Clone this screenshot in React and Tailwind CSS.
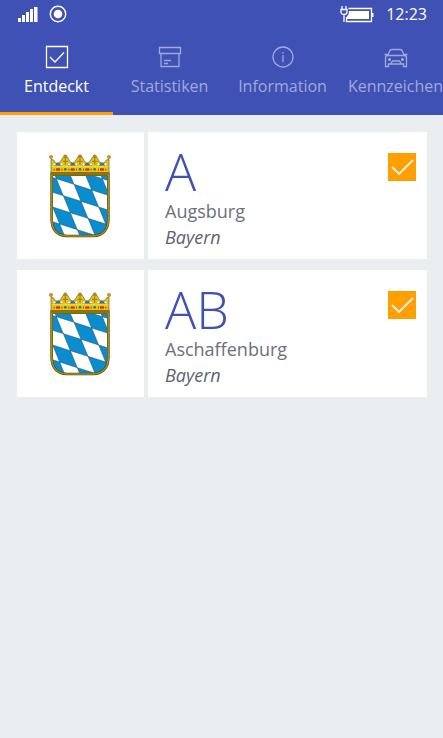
import { useState } from "react";

const GRID = [-4, -3, -2, -1, 0, 1, 2, 3];

// Lozenge field: sheared lattice, alternate cells blue.
const LOZENGES = GRID.flatMap((i) =>
  GRID.filter((j) => (i + j) % 2 !== 0).map((j) => {
    const x = 96 + 53 * i + 21 * j;
    const y = 142 + 17 * i + 51 * j;
    return `M${x} ${y}l53 17l21 51l-53 -17z`;
  })
).join("");

const SHIELD = "M8 62H178V196C178 226 162 245 132 246H54C24 245 8 226 8 196Z";

function CoatOfArms({ id }) {
  return (
    <svg className="h-[84px] w-[62px]" viewBox="0 0 186 252" role="img" aria-label="Wappen Bayern">
      <clipPath id={id}>
        <path d={SHIELD} />
      </clipPath>
      <path d={SHIELD} fill="#fff" />
      <path d={LOZENGES} fill="#0a8dcf" stroke="#24485c" strokeWidth="1.5" clipPath={`url(#${id})`} />
      <path d={SHIELD} fill="none" stroke="#4b400c" strokeWidth="8" />
      <path d={SHIELD} fill="none" stroke="#a98e14" strokeWidth="5" />
      <path
        d="M6 60L6 16L14 18Q18 30 27 28Q36 24 42 10L49 5L56 10Q62 26 71 28Q80 24 86 10L93 5L100 10Q106 26 115 28Q124 24 130 10L137 5L144 10Q150 26 159 28Q168 28 172 18L180 16L180 60Z"
        fill="#e6c41c"
        stroke="#6b5810"
        strokeWidth="2"
      />
      {[27, 71, 115, 159].map((x) => (
        <g key={x}>
          <path d={`M${x - 9} 34Q${x} 18 ${x + 9} 34Z`} fill="#1583bd" stroke="#55501a" />
          <circle cx={x - 11} cy="31" r="4" fill="#fff" stroke="#716425" />
          <circle cx={x + 11} cy="31" r="4" fill="#fff" stroke="#716425" />
          <rect x={x - 6} y="43" width="12" height="7" fill="#d82b20" />
        </g>
      ))}
      {[49, 93, 137].map((x) => (
        <g key={x}>
          <circle cx={x} cy="7" r="5" fill="#bd8b1b" stroke="#6b5810" />
          <path d={`M${x} 13V32M${x - 8} 22H${x + 8}`} stroke="#a38a17" strokeWidth="4" />
          <circle cx={x} cy="46" r="4" fill="#20817f" />
        </g>
      ))}
      <circle cx="6" cy="9" r="5" fill="#df901b" stroke="#6b5810" />
      <circle cx="180" cy="9" r="5" fill="#df901b" stroke="#6b5810" />
      <path d="M8 38H178" stroke="#f7d91d" strokeWidth="4" />
      <path d="M14 47H17M37 47H40M58 47H61M81 47H84M102 47H105M125 47H128M147 47H150M169 47H172" stroke="#6d5d13" strokeWidth="5" />
      <path d="M5 58H181" stroke="#8b730d" strokeWidth="8" />
    </svg>
  );
}

function TabIcon({ name }) {
  return (
    <svg className="size-6" viewBox="0 0 24 24" fill="none" stroke="currentColor" strokeWidth="1.3" aria-hidden="true">
      {name === "check" && <path d="M1.5 1.5H22.5V22.5H1.5ZM5 12L10 17L19 7.500" />}
      {name === "archive" && <path d="M1.500 2.500H22.500V8.500H1.500ZM3 8.500V21.500H21V8.500M6 15.500H13M6 18.500H10" />}
      {name === "info" && (
        <>
          <circle cx="12" cy="12" r="10" />
          <path d="M12 10V17M12 7V8.500" />
        </>
      )}
      {name === "car" && (
        <>
          <path d="M3.500 11L5.500 6.500Q6 4.500 8 4.500H16Q18 4.500 18.500 6.500L20.500 11M.5 9.500H4M20 9.500H23.500M4 10.500H20Q22.500 10.500 22.500 13V21.500H19.500V19H4.500V21.500H1.500V13Q1.500 10.500 4 10.500ZM6.500 19L8.500 16H15.500L17.500 19" />
          <circle cx="5.500" cy="14.500" r=".9" fill="currentColor" />
          <circle cx="18.500" cy="14.500" r=".9" fill="currentColor" />
        </>
      )}
    </svg>
  );
}

const TABS = [
  { label: "Entdeckt", icon: "check" },
  { label: "Statistiken", icon: "archive" },
  { label: "Information", icon: "info" },
  { label: "Kennzeichen", icon: "car" },
];

function StatusBar() {
  return (
    <div className="flex h-7 items-center justify-between pr-4 pl-4 text-white">
      <div className="flex items-center gap-[11px]">
        <svg className="h-4 w-[22px]" viewBox="0 0 22 16" fill="currentColor" aria-label="Signal">
          <path d="M2 12H5V16H2ZM6 9H9V16H6ZM10 6H13V16H10ZM14 3H17V16H14ZM18 1H21.500V16H18Z" />
        </svg>
        <svg className="size-[18px]" viewBox="0 0 18 18" aria-hidden="true">
          <circle cx="9" cy="9" r="7.700" fill="none" stroke="currentColor" strokeWidth="1.400" />
          <circle cx="9" cy="9" r="4.300" fill="currentColor" />
        </svg>
      </div>
      <div className="flex items-center gap-3">
        <svg className="h-[18px] w-[34px]" viewBox="0 0 34 18" fill="none" stroke="currentColor" strokeWidth="1.300" aria-label="Akku">
          <path d="M2 1V4M6 1V4M1 4.500H7V7Q7 9.500 4 9.500Q1 9.500 1 7ZM4 9.500V17M8.500 3.500H31.500V16.500H6.500V12" />
          <path d="M9 6H29V14H7V11Q9 10 9 6Z" fill="currentColor" stroke="none" />
          <path d="M32.500 8V12" strokeWidth="2" />
        </svg>
        <time className="text-base leading-6">12:23</time>
      </div>
    </div>
  );
}

function PlateCard({ code, city, state }) {
  const [found, setFound] = useState(true);
  return (
    <li className="flex gap-1">
      <div className="flex w-[127px] shrink-0 items-center justify-center bg-white pr-px">
        <CoatOfArms id={`shield-${code}`} />
      </div>
      <div className="flex min-w-0 flex-1 items-start justify-between bg-white pt-3 pr-[11px] pb-[9px] pl-[17px]">
        <div className="text-[18px] leading-[26px] text-[#6b707d]">
          <h2 className="text-[52px] leading-[54px] font-light text-[#3f51b5]">{code}</h2>
          <p>{city}</p>
          <p className="text-[#5d6270] italic">{state}</p>
        </div>
        <label className="mt-[9px] grid size-7 shrink-0 cursor-pointer bg-[#ffa000]">
          <input
            type="checkbox"
            checked={found}
            onChange={(e) => setFound(e.target.checked)}
            aria-label={`${city} entdeckt`}
            className="peer col-start-1 row-start-1 size-7 appearance-none"
          />
          <svg
            className="pointer-events-none invisible col-start-1 row-start-1 size-7 peer-checked:visible"
            viewBox="0 0 28 28"
            fill="none"
            stroke="#f5f3ee"
            strokeWidth="1.800"
            aria-hidden="true"
          >
            <path d="M4 14L11 21L25 7" />
          </svg>
        </label>
      </div>
    </li>
  );
}

export default function App() {
  const [active, setActive] = useState(0);
  return (
    <div className="min-h-screen bg-[#eaeef1] font-['Open_Sans','Noto_Sans',sans-serif]">
      <header className="overflow-hidden bg-[#3f51b5]">
        <StatusBar />
        <nav className="flex" role="tablist">
          {TABS.map((tab, i) => (
            <button
              key={tab.label}
              type="button"
              role="tab"
              aria-selected={i === active}
              onClick={() => setActive(i)}
              className={
                "flex w-[113px] shrink-0 flex-col items-center gap-[5px] border-b-3 pt-[17px] pb-[14px] text-base leading-6 whitespace-nowrap " +
                (i === active ? "border-[#ffa000] text-white" : "border-transparent text-[#a0a9d9]")
              }
            >
              <TabIcon name={tab.icon} />
              <span>{tab.label}</span>
            </button>
          ))}
        </nav>
      </header>
      <main className="py-[17px] pr-4 pl-[17px]">
        <ul className="flex flex-col gap-[11px]">
          <PlateCard code="A" city="Augsburg" state="Bayern" />
          <PlateCard code="AB" city="Aschaffenburg" state="Bayern" />
        </ul>
      </main>
    </div>
  );
}
